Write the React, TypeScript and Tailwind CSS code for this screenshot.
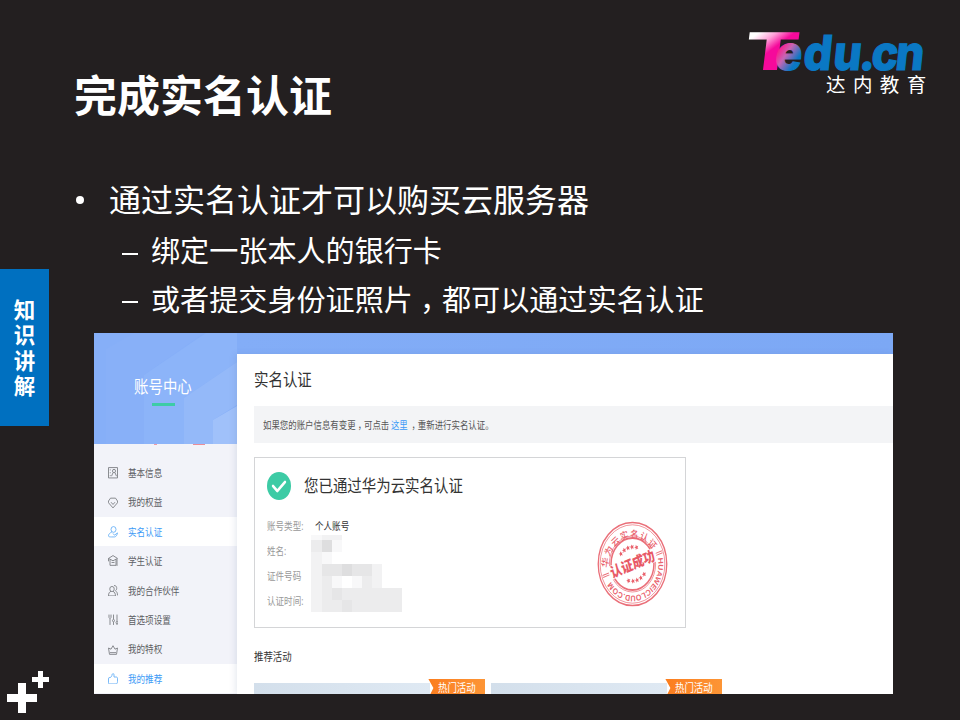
import React from "react";

const CN = "font-['Open_Sans','Noto_Sans_CJK_SC',sans-serif]";

/* Horizontally condensed text, as the embedded page is squeezed on the slide */
function Narrow({ className = "", children }: { className?: string; children: React.ReactNode }) {
  return <span className={`inline-block origin-left scale-x-[.84] whitespace-nowrap ${className}`}>{children}</span>;
}

/* Full-width comma moved to the middle of its cell */
function Comma() {
  return <span className="ml-[.25em] mr-[-.25em]">，</span>;
}

function Logo() {
  return (
    <svg className="block h-[75px] w-[190px]" viewBox="744 25 190 75">
      <defs>
        <linearGradient id="tFill" gradientUnits="userSpaceOnUse" x1="8" y1="-38" x2="26" y2="-16">
          <stop offset="0.1" stopColor="#ffffff" />
          <stop offset="0.5" stopColor="#ffa0d8" />
          <stop offset="0.9" stopColor="#f50a9b" />
        </linearGradient>
        <linearGradient id="eFill" gradientUnits="userSpaceOnUse" x1="3" y1="-18" x2="22" y2="-6">
          <stop offset="0" stopColor="#f7228f" />
          <stop offset="0.4" stopColor="#c765b4" />
          <stop offset="1" stopColor="#0a78c4" />
        </linearGradient>
      </defs>
      <text transform="translate(742.5 70) skewX(-7)" fill="url(#tFill)" fontSize="52" fontWeight="800" fontFamily="Inter" textLength="55" lengthAdjust="spacingAndGlyphs">T</text>
      <text transform="translate(773.5 69.5) skewX(-6) scale(.93 1)" fill="url(#eFill)" stroke="url(#eFill)" strokeWidth="1.2" fontSize="48" fontWeight="800" fontFamily="Inter" x="0.6 30.8 63 91.5 104 130">edu.cn</text>
      <text x="826" y="92" fill="#fff" fontSize="19.5" fontFamily="Noto Sans CJK SC" letterSpacing="7.4">达内教育</text>
    </svg>
  );
}

const icons: Record<string, React.ReactNode> = {
  info: (<><path d="M1 1h18v18H1z" /><circle cx="12" cy="7" r="3" /><path d="M7 16l3-6M17 16l-3-6M3.5 5h2M3.5 10h2M3.5 15h2" /></>),
  gem: (<><path d="M5 2h10l4 5v3l-9 9-9-9V7z" /><path d="M6 9l4 4 4-4" /></>),
  user: (<><circle cx="11" cy="6" r="5" /><path d="M8 10c-4 2-7 4-7 7 0 2 3 2 6 2h6c3 0 5-3 6-7l-6 4-3-3" /></>),
  school: (<><path d="M1 6l9-5 9 5-9 4zM4 8v10h12V8M7 13h6M1 6v5M18 7v12" /></>),
  partner: (<><circle cx="8" cy="7" r="4.5" /><path d="M1 19c0-5 2-7 5-8M15 19c0-4-2-7-5-8M1 19h14M12 1c6-1 7 7 3 9 3 2 4 4 4 8" /></>),
  tune: (<><path d="M2 1v5l2 2 2-2V1M4 8v11M11 1v8M11 14v5M18 1v12M18 17v2" /><circle cx="11" cy="11.5" r="2" /><circle cx="18" cy="15" r="2" /></>),
  crown: (<path d="M1 7l5 2 4-6 4 6 5-2-2 11H3zM4 15h12" />),
  thumb: (<path d="M4 8H2C1 8 1 9 1 10v7c0 2 1 2 3 2h12c2 0 3-2 3-4V9c0-1-1-2-2-2h-5V3c0-3-4-2-4 0 0 2-1 4-4 5z" />),
};

const nav = [
  { icon: "info", label: "基本信息" },
  { icon: "gem", label: "我的权益" },
  { icon: "user", label: "实名认证", active: true },
  { icon: "school", label: "学生认证" },
  { icon: "partner", label: "我的合作伙伴" },
  { icon: "tune", label: "首选项设置" },
  { icon: "crown", label: "我的特权" },
  { icon: "thumb", label: "我的推荐", active: true },
];

function Sidebar() {
  return (
    <div className="flex w-[143px] shrink-0 flex-col bg-[#f2f3f9]">
      <div className="relative h-[111px] shrink-0 bg-[#86aff8]">
        <svg className="absolute inset-0 h-full w-full" viewBox="0 0 143 111" preserveAspectRatio="none">
          <path d="M12 16L40 0H110L50 42V111H12z" fill="#88b0f8" />
          <path d="M50 42L112 0H143V29L90 65V111H50z" fill="#8cb4f9" />
          <path d="M90 65L143 29V72L119 87V111H90z" fill="#94b9f9" />
          <path d="M119 87L143 73V111H119z" fill="#a0c1fa" />
        </svg>
        <div className="relative flex flex-col pl-10 pt-[42px]">
          <Narrow className="text-[17.2px] leading-6 text-white">账号中心</Narrow>
          <div className="ml-[18px] mt-[4px] h-[3px] w-[23px] bg-[#3dcca6]" />
        </div>
      </div>
      <div className="flex h-[2px] shrink-0"><div className="ml-[60px] h-px w-[3px] bg-[#f29aa6]" /><div className="ml-[36px] h-px w-[12px] bg-[#ec8d98]" /></div>
      <div className="flex flex-col pt-[12.3px]">
        {nav.map((n) => (
          <div key={n.icon} className={`flex h-[29.4px] items-center pl-[14px] ${n.active ? "bg-white text-[#3d9bf6]" : "text-[#5c5e63]"}`}>
            <svg className="mr-[10px] h-[11.5px] w-[10px] opacity-80" viewBox="0 0 20 20" preserveAspectRatio="none" fill="none" stroke="currentColor" strokeWidth="1.6">{icons[n.icon]}</svg>
            <Narrow className="text-[10.2px] leading-4">{n.label}</Narrow>
          </div>
        ))}
      </div>
    </div>
  );
}

/* Pixelated redaction: one string per row, one digit per tone */
const tones = ["bg-transparent", "bg-[#f8f8f9]", "bg-[#f2f2f3]", "bg-[#ececed]", "bg-[#e6e6e7]", "bg-[#dededf]"];
const mosaic = ["0122000000", "0351000000", "0210000000", "0244544200", "0231013200", "0234333333", "0233433333"];

function Mosaic() {
  return (
    <div className="absolute left-[46px] top-[77px] flex flex-col">
      {mosaic.map((row, y) => (
        <div key={y} className={`flex ${y === 0 ? "h-[5px]" : "h-[12px]"}`}>
          {row.split("").map((c, x) => (
            <div key={x} className={`w-[10.1px] ${tones[Number(c)]}`} />
          ))}
        </div>
      ))}
    </div>
  );
}

function Stars({ y, bend }: { y: number; bend: number }) {
  return (
    <>
      {[-2, -1, 0, 1, 2].map((i) => (
        <path key={i} transform={`translate(${i * 5} ${y + bend * i * i})`} d="M0-2.6L.8-.9 2.6-.8 1.2.4 1.6 2.3 0 1.3-1.6 2.3-1.2.4-2.6-.8-.8-.9z" fill="#e9606b" />
      ))}
    </>
  );
}

function Stamp() {
  return (
    <svg className="absolute left-[341.5px] top-[63px] h-[86px] w-[71px]" viewBox="-43 -43 86 86" preserveAspectRatio="none">
      <defs>
        <path id="arcTop" d="M-30 4A30.3 30.3 0 0 1 30.3 0" />
        <path id="arcBottom" d="M30.8-6A31.4 31.4 0 1 1-31.4 0" />
      </defs>
      <g fill="none" stroke="#ea6f79">
        <circle r="41.5" strokeWidth="1.6" />
        <circle r="39.2" strokeWidth=".8" />
        <circle r="28" strokeWidth=".8" />
        <circle r="26" strokeWidth="1.8" />
      </g>
      <g fill="#e9626d" fontFamily="Liberation Sans, Noto Sans CJK SC">
        <text fontSize="10" fontWeight="500"><textPath href="#arcTop" textLength="76">华为云实名认证</textPath></text>
        <text fontSize="8.4" fontWeight="700"><textPath href="#arcBottom" textLength="86">HUAWEICLOUD.COM</textPath></text>
      </g>
      <g transform="rotate(-19)">
        <path d="M-38-.9h8M-38 1.2h8M30-.9h8M30 1.2h8" stroke="#ea6f79" strokeWidth="1" />
        <path d="M-29-7H29V7H-29z" fill="#fff" />
        <text x="-28" y="5.4" fontSize="14.6" fontWeight="900" fill="#e85a66" fontFamily="Noto Sans CJK SC" textLength="56" lengthAdjust="spacingAndGlyphs">认证成功</text>
        <Stars y={-17} bend={0.7} />
        <Stars y={17} bend={-0.7} />
      </g>
    </svg>
  );
}

const rows = [
  ["账号类型:", "个人账号"],
  ["姓名:", ""],
  ["证件号码", ""],
  ["认证时间:", ""],
];

function Promo() {
  return (
    <div className="flex h-[15px] w-[231px] items-end">
      <div className="h-[11px] flex-1 bg-linear-to-r from-[#d3dfeb] to-[#dfe9f3]" />
      <div className="-ml-[2px] flex h-[15px] w-[57px] items-center bg-linear-to-r from-[#fb7d1e] to-[#fd9535] pl-[10px] [clip-path:polygon(0_0,100%_0,100%_100%,2px_100%,5px_60%)]">
        <Narrow className="mt-[3px] text-[11.2px] leading-[12px] text-white">热门活动</Narrow>
      </div>
    </div>
  );
}

function AccountPage() {
  return (
    <div className="flex h-[361px] w-[799px] overflow-hidden bg-white">
      <Sidebar />
      <div className="flex min-w-0 flex-1 flex-col">
        <div className="h-[21px] shrink-0 bg-linear-to-r from-[#83adf7] to-[#7ca8f5]" />
        <div className="relative flex flex-1 flex-col bg-white pl-[17.4px] shadow-[-2px_0_6px_rgba(80,100,150,0.13)]">
          <Narrow className="mt-[14px] text-[17.2px] leading-6 text-[#333]">实名认证</Narrow>
          <div className="mt-[14px] flex h-[37px] items-center bg-[#f3f4f6] pl-[9px]">
            <Narrow className="text-[10.02px] leading-4 text-[#555]">
              如果您的账户信息有变更<Comma />可点击<span className="mx-[2px] text-[#3d9bf6]">这里</span><Comma />重新进行实名认证。
            </Narrow>
          </div>
          <div className="relative mt-[14px] h-[171px] w-[432px] border border-[#d4d5d7]">
            <div className="flex h-[55px] items-center pl-[12px]">
              <svg className="mr-[13px] h-[28px] w-[24px]" viewBox="0 0 28 28" preserveAspectRatio="none">
                <circle cx="14" cy="14" r="14" fill="#3dcba5" />
                <path d="M7 14l5 5 9-9" fill="none" stroke="#fff" strokeWidth="2.8" strokeLinecap="round" strokeLinejoin="round" />
              </svg>
              <Narrow className="text-[17.2px] leading-6 text-[#333]">您已通过华为云实名认证</Narrow>
            </div>
            {rows.map(([k, v]) => (
              <div key={k} className="flex h-[25px] items-center pl-[12px]">
                <div className="flex w-[48px]"><Narrow className="text-[10.2px] leading-4 text-[#999]">{k}</Narrow></div>
                <Narrow className="text-[10.2px] leading-4 text-[#333]">{v}</Narrow>
              </div>
            ))}
            <Mosaic />
            <Stamp />
          </div>
          <Narrow className="mt-[20px] text-[11.2px] leading-[18px] text-[#333]">推荐活动</Narrow>
          <div className="mt-[13px] flex gap-[6px]">
            <Promo />
            <Promo />
          </div>
        </div>
      </div>
    </div>
  );
}

export default function App() {
  return (
    <div className={`flex h-[720px] w-[960px] overflow-hidden bg-[#231f20] text-white ${CN}`}>
      <aside className="flex w-[49px] shrink-0 flex-col pt-[269px]">
        <div className="flex h-[157px] flex-col items-center justify-center bg-[#0070c0] text-[21.5px] font-bold leading-[25.4px]">
          <span>知</span><span>识</span><span>讲</span><span>解</span>
        </div>
        <svg className="mt-auto mb-[6px] ml-[6px] h-[44px] w-[43px]" viewBox="6 670 43 44" fill="#fff">
          <path d="M18 683h8v11h11v8H26v11h-8v-11H7v-8h11zM38 671h5v6h6v5h-6v6h-5v-6h-6v-5h6z" />
        </svg>
      </aside>
      <main className="flex flex-1 flex-col pl-[25px]">
        <header className="flex h-[165px] justify-between">
          <h1 className="pt-[64px] text-[43px] font-bold leading-[64px]">完成实名认证</h1>
          <div className="pr-[26px] pt-[25px]"><Logo /></div>
        </header>
        <div className="flex h-[70px] items-center text-[32px]">
          <span className="ml-[2px] mr-[25px] size-[8px] rounded-full bg-white" />
          <span className="whitespace-nowrap">通过实名认证才可以购买云服务器</span>
        </div>
        <div className="mt-px flex h-[32px] items-center text-[29.1px]">
          <span className="ml-[48px] mr-[13px] mt-[4px] h-[2px] w-[16px] bg-white" />
          <span className="whitespace-nowrap">绑定一张本人的银行卡</span>
        </div>
        <div className="mt-[17px] flex h-[32px] items-center text-[29.1px]">
          <span className="ml-[48px] mr-[13px] mt-[2px] h-[2px] w-[16px] bg-white" />
          <span className="whitespace-nowrap">或者提交身份证照片<Comma />都可以通过实名认证</span>
        </div>
        <div className="ml-[20px] mt-[16px]"><AccountPage /></div>
      </main>
    </div>
  );
}
